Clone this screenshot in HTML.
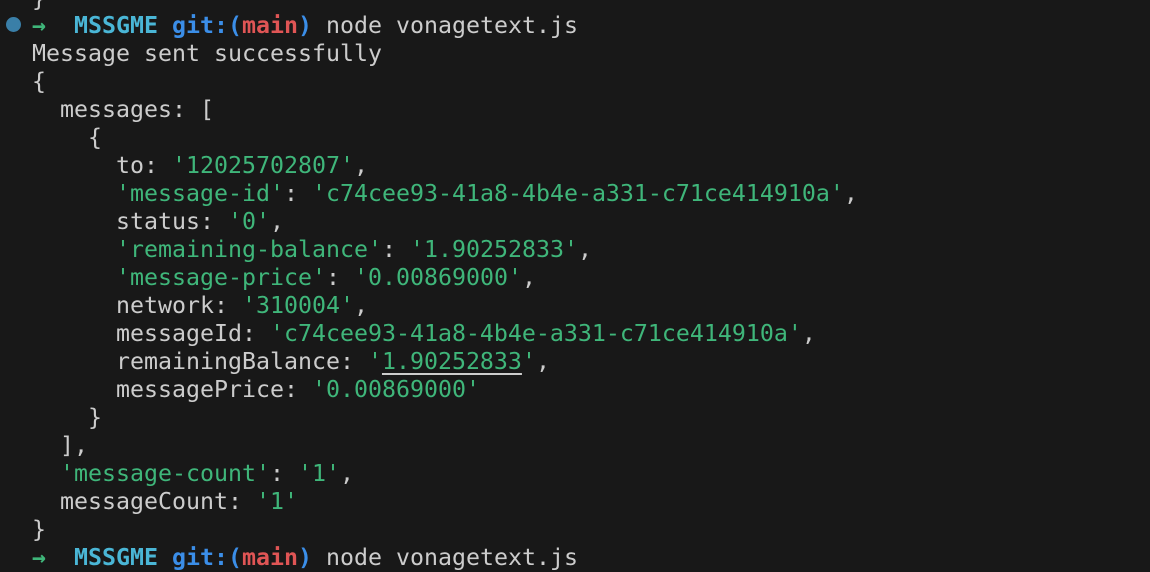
<!DOCTYPE html>
<html><head><style>
html,body{margin:0;padding:0;background:#181818;width:1150px;height:550px;overflow:hidden}
pre{position:absolute;left:32px;top:-15.5px;margin:0;font-family:"DejaVu Sans Mono","Liberation Mono",monospace;font-size:23.25px;line-height:27.95px;color:#cccccc;white-space:pre}
.g{color:#3fb67a}.c{color:#4ab6d6;font-weight:bold}.b{color:#3b8ee8;font-weight:bold}.r{color:#e05555;font-weight:bold}.a{color:#3fb67a;font-weight:bold}
.u{text-decoration:underline;text-decoration-color:#cccccc;text-underline-offset:4px}
.dot{position:absolute;left:6px;top:17px;width:15px;height:15px;border-radius:50%;background:#3a7fa8}
</style></head><body>
<div class="dot"></div>
<pre>}
<span class="a">→</span>  <span class="c">MSSGME</span> <span class="b">git:(</span><span class="r">main</span><span class="b">)</span> node vonagetext.js
Message sent successfully
{
  messages: [
    {
      to: <span class="g">'12025702807'</span>,
      <span class="g">'message-id'</span>: <span class="g">'c74cee93-41a8-4b4e-a331-c71ce414910a'</span>,
      status: <span class="g">'0'</span>,
      <span class="g">'remaining-balance'</span>: <span class="g">'1.90252833'</span>,
      <span class="g">'message-price'</span>: <span class="g">'0.00869000'</span>,
      network: <span class="g">'310004'</span>,
      messageId: <span class="g">'c74cee93-41a8-4b4e-a331-c71ce414910a'</span>,
      remainingBalance: <span class="g">'<span class="u">1.90252833</span>'</span>,
      messagePrice: <span class="g">'0.00869000'</span>
    }
  ],
  <span class="g">'message-count'</span>: <span class="g">'1'</span>,
  messageCount: <span class="g">'1'</span>
}
<span class="a">→</span>  <span class="c">MSSGME</span> <span class="b">git:(</span><span class="r">main</span><span class="b">)</span> node vonagetext.js
</pre>
</body></html>
